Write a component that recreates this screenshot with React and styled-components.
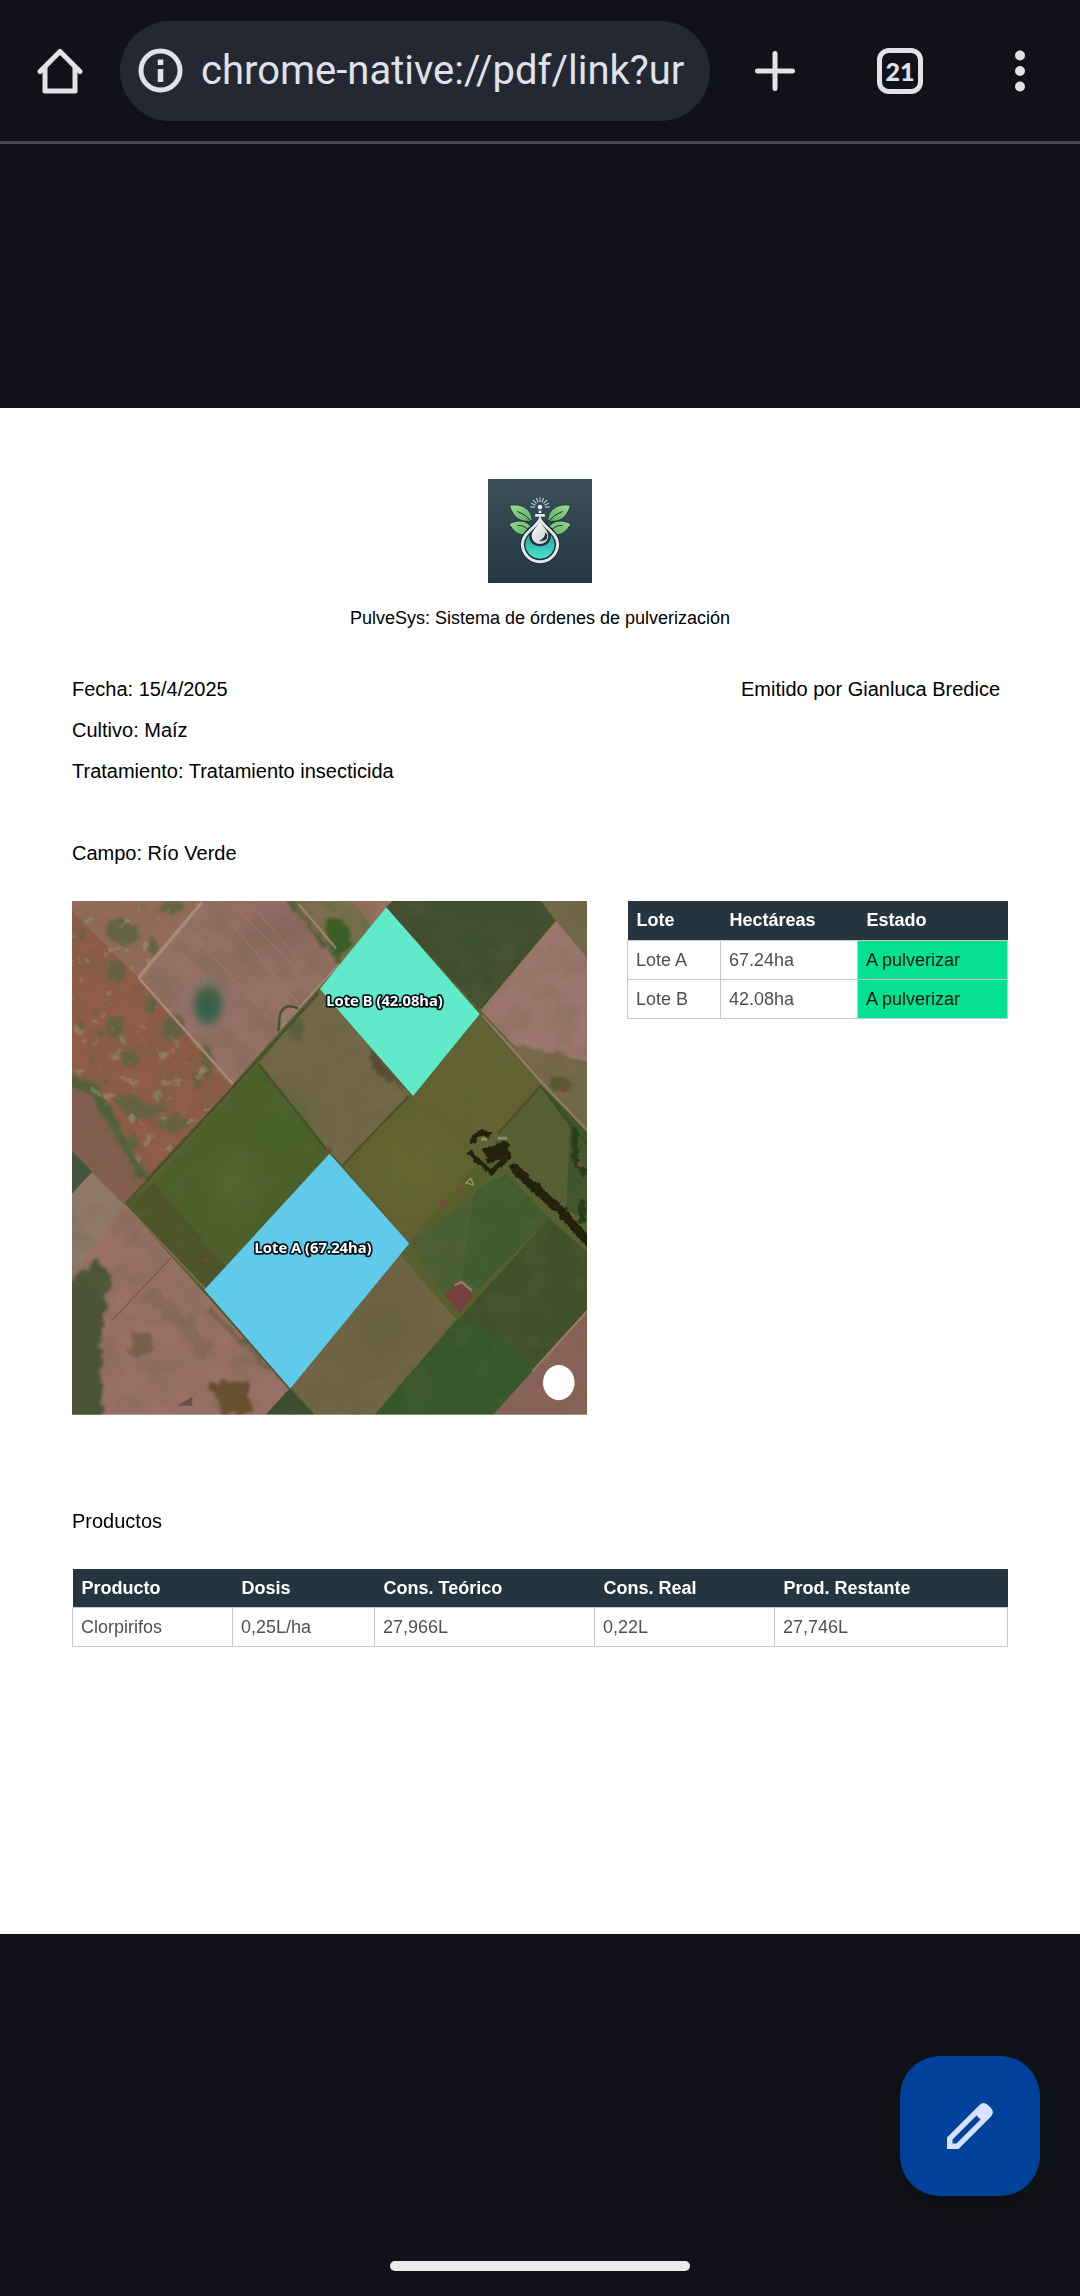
import React from "react";
import styled, { createGlobalStyle } from "styled-components";

const GlobalStyle = createGlobalStyle`
  * { box-sizing: border-box; }
  body { margin: 0; background: #111219; font-family: "Liberation Sans", Arial, sans-serif; }
  button { border: 0; padding: 0; margin: 0; background: none; color: inherit; font: inherit; cursor: pointer; }
`;

const Screen = styled.div`
  min-height: 100vh;
  display: flex;
  flex-direction: column;
  background: #111219;
`;

const Toolbar = styled.header`
  display: flex;
  align-items: center;
  height: 144px;
  border-bottom: 3px solid #49484e;
  color: #e3e2e9;
`;

const IconButton = styled.button`
  flex: none;
  display: flex;
  align-items: center;
  justify-content: center;
  width: ${(p) => p.$width}px;
  height: 100px;
`;

const AddressBar = styled.div`
  flex: 1;
  min-width: 0;
  display: flex;
  align-items: center;
  gap: 18px;
  height: 100px;
  padding: 0 18px;
  border-radius: 50px;
  background: #242833;
`;

const SiteInfo = styled.button`
  flex: none;
  display: flex;
`;

const Address = styled.input`
  flex: 1;
  min-width: 0;
  border: 0;
  padding: 0;
  outline: 0;
  background: none;
  color: #dfe1ec;
  font: 400 40px/60px Roboto, sans-serif;
`;

const TabCount = styled.span`
  display: flex;
  align-items: center;
  justify-content: center;
  width: 46px;
  height: 46px;
  border: 5px solid #e3e2e9;
  border-radius: 12px;
  font: 900 25px/36px Lato, sans-serif;
`;

const Viewer = styled.main`
  padding-top: 264px;
`;

const Sheet = styled.article`
  display: flex;
  flex-direction: column;
  aspect-ratio: 1080 / 1526;
  padding: 71px 72px 0;
  background: #fff;
  color: #000;
`;

const Brand = styled.div`
  display: flex;
  flex-direction: column;
  align-items: center;
  gap: 24px;
  margin-bottom: 40px;
`;

const Title = styled.h1`
  margin: 0;
  font-size: 18px;
  line-height: 22px;
  font-weight: 400;
`;

const Meta = styled.div`
  display: flex;
  justify-content: space-between;
  padding-right: 8px;
`;

const Line = styled.p`
  margin: 0;
  font-size: 20px;
  line-height: 41px;
  font-weight: 400;
`;

const Field = styled(Line)`
  margin: 41px 0 27px;
`;

const Plots = styled.section`
  display: grid;
  grid-template-columns: 515fr 381fr;
  column-gap: 40px;
  align-items: start;
  margin-bottom: 86px;
`;

const MapDrawing = styled.svg`
  display: block;
  width: 100%;
`;

const Table = styled.table`
  width: 100%;
  table-layout: fixed;
  border-collapse: collapse;
  font-size: 18px;
  line-height: 20px;
  color: #505050;
`;

const Head = styled.th`
  height: 39px;
  padding: 0 9px;
  width: ${(p) => p.$width};
  background: #24353f;
  color: #fff;
  font-weight: 700;
  text-align: left;
`;

const Cell = styled.td`
  height: 39px;
  padding: 0 8px;
  border: 1px solid #c8c8c8;
  background: ${(p) => (p.$status ? "#05e091" : "#fff")};
  color: ${(p) => (p.$status ? "#00150c" : "inherit")};
`;

const Products = styled.section`
  display: flex;
  flex-direction: column;
  gap: 27px;
`;

const Footer = styled.footer`
  flex: 1;
  display: flex;
  flex-direction: column;
  align-items: center;
  justify-content: space-between;
  padding: 122px 40px 25px;
`;

const EditButton = styled.button`
  align-self: flex-end;
  display: flex;
  align-items: center;
  justify-content: center;
  width: 140px;
  height: 140px;
  border-radius: 40px;
  background: #00429b;
  color: #d9e2ff;
  box-shadow: 0 10px 16px #0f1113;
`;

const HomeIndicator = styled.div`
  width: 300px;
  height: 10px;
  border-radius: 5px;
  background: #ebebec;
`;

const HomeIcon = () => (
  <svg width="46" height="46" viewBox="0 0 46 46" fill="none" stroke="currentColor" strokeWidth="5" strokeLinejoin="round" strokeLinecap="round" aria-hidden="true">
    <path d="M3 23.500 L23 3.500 L43 23.500" />
    <path d="M8 20 V43 H38 V20" />
  </svg>
);

const InfoIcon = () => (
  <svg width="45" height="45" viewBox="0 0 45 45" fill="none" stroke="#dfe1ec" strokeWidth="5" aria-hidden="true">
    <circle cx="22.500" cy="22.500" r="19.500" />
    <path d="M22.500 21 V34 M22.500 11.500 V17" strokeWidth="5.500" />
  </svg>
);

const PlusIcon = () => (
  <svg width="40" height="40" viewBox="0 0 40 40" stroke="currentColor" strokeWidth="5" strokeLinecap="round" aria-hidden="true">
    <path d="M20 2.500 V37.500 M2.500 20 H37.500" />
  </svg>
);

const MoreIcon = () => (
  <svg width="10" height="42" viewBox="0 0 10 42" fill="currentColor" aria-hidden="true">
    <circle cx="5" cy="5.500" r="5" />
    <circle cx="5" cy="21" r="5" />
    <circle cx="5" cy="36.500" r="5" />
  </svg>
);

const PencilIcon = () => (
  <svg width="46" height="46" viewBox="0 0 46 46" fill="currentColor" fillRule="evenodd" aria-hidden="true">
    <path d="M0 34.500 L32.500 2 Q36.700 -1.800 41 2 L44 5 Q47.800 9.300 44 13.500 L11.500 46 H0 Z M5.500 36.500 V40.500 H9.500 L33.500 16.500 L29.500 12.500 Z" />
  </svg>
);

const rays = [-90, -67, -45, -22, 0, 22, 45, 67, 90];

const BrandLogo = () => (
  <svg width="104" height="104" viewBox="54 57 312 312" role="img" aria-label="PulveSys">
    <defs>
      <linearGradient id="tile" x1="0" y1="0" x2="0" y2="1">
        <stop offset="0" stopColor="#3c505c" />
        <stop offset="1" stopColor="#243742" />
      </linearGradient>
      <linearGradient id="leaf" x1="0" y1="0" x2="1" y2="1">
        <stop offset="0" stopColor="#9adb8f" />
        <stop offset="1" stopColor="#5bb066" />
      </linearGradient>
      <linearGradient id="water" x1="0" y1="0" x2="0" y2="1">
        <stop offset="0" stopColor="#1fa79e" />
        <stop offset="1" stopColor="#4ee0cd" />
      </linearGradient>
      <linearGradient id="drop" x1="0" y1="0" x2="1" y2="1">
        <stop offset="0" stopColor="#ffffff" />
        <stop offset="1" stopColor="#c3cacb" />
      </linearGradient>
      <g id="leaves" stroke="#203640" strokeWidth="3">
        <path d="M118 136 C150 130 184 142 187 182 C154 190 130 175 118 136 Z" fill="url(#leaf)" />
        <path d="M117 192 C144 176 170 182 183 199 L164 224 C144 227 129 212 117 192 Z" fill="url(#leaf)" />
        <path d="M142 154 Q166 162 184 184 M142 196 Q160 194 174 208" fill="none" />
      </g>
    </defs>
    <rect x="54" y="57" width="312" height="312" fill="url(#tile)" />
    <use href="#leaves" />
    <use href="#leaves" transform="translate(420 0) scale(-1 1)" />
    <path d="M210 166 C196 194 150 212 150 252 A60 60 0 0 0 270 252 C270 212 224 194 210 166 Z" fill="#172c35" />
    <path d="M210 177 C199 202 157 219 157 252 A53 53 0 0 0 263 252 C263 219 221 202 210 177 Z" fill="#1d343e" stroke="#e2e7e8" strokeWidth="9" />
    <path d="M178 224 C166 238 163 258 170 270 A43 41 0 0 0 250 270 C257 258 254 238 242 224 C246 270 174 270 178 224 Z" fill="url(#water)" />
    <path d="M210 183 C203 200 185 211 185 228 A25 24 0 0 0 235 228 C235 211 217 200 210 183 Z" fill="url(#drop)" />
    <path d="M226 217 Q226 235 208 242 Q232 246 232 225 Z" fill="#1c3039" />
    <g fill="#e8ecec">
      <rect x="195" y="162" width="30" height="8" rx="3" />
      <rect x="206" y="152" width="8" height="7" />
      <circle cx="210" cy="141" r="7" />
    </g>
    <g stroke="#d5dcde" strokeWidth="3" strokeLinecap="round">
      {rays.map((a) => (
        <path key={a} d="M210 125 V113" transform={`rotate(${a} 210 141)`} />
      ))}
    </g>
  </svg>
);

const redSpots = [
  [160, 240, 26, 34], [158, 395, 26, 30], [170, 120, 34, 42], [200, 490, 24, 22], [262, 330, 18, 22],
  [330, 400, 34, 40], [425, 500, 16, 50], [400, 560, 12, 28], [60, 130, 10, 12], [115, 415, 12, 10],
  [320, 50, 34, 18], [60, 390, 10, 14], [105, 355, 9, 8], [270, 165, 22, 30], [215, 130, 16, 26],
  [240, 640, 60, 26], [330, 680, 44, 24], [190, 610, 40, 20], [205, 740, 16, 26], [90, 500, 10, 6], [130, 560, 12, 8],
];

const FieldMap = () => (
  <MapDrawing viewBox="32 32 1498 1494" role="img" aria-label="Mapa de lotes">
    <defs>
      <filter id="organic" x="-10%" y="-10%" width="120%" height="120%">
        <feTurbulence type="fractalNoise" baseFrequency="0.03" numOctaves="3" seed="4" />
        <feDisplacementMap in="SourceGraphic" scale="38" xChannelSelector="R" yChannelSelector="G" />
        <feGaussianBlur stdDeviation="4" />
      </filter>
      <filter id="canopy" x="-10%" y="-10%" width="120%" height="120%">
        <feTurbulence type="fractalNoise" baseFrequency="0.06" numOctaves="2" seed="7" />
        <feDisplacementMap in="SourceGraphic" scale="16" xChannelSelector="R" yChannelSelector="G" />
        <feGaussianBlur stdDeviation="2" />
      </filter>
      <filter id="edge" x="-5%" y="-5%" width="110%" height="110%">
        <feGaussianBlur stdDeviation="2" />
      </filter>
      <filter id="soft" x="-40%" y="-40%" width="180%" height="180%">
        <feGaussianBlur stdDeviation="12" />
      </filter>
      <filter id="haze" x="-50%" y="-50%" width="200%" height="200%">
        <feGaussianBlur stdDeviation="34" />
      </filter>
      <filter id="grain" x="0" y="0" width="100%" height="100%">
        <feTurbulence type="fractalNoise" baseFrequency="0.012" numOctaves="5" seed="9" />
        <feColorMatrix values="0 0 0 0 0.12  0 0 0 0 0.13  0 0 0 0 0.06  1.6 0 0 0 -0.66" />
      </filter>
      <filter id="tufts" x="0" y="0" width="100%" height="100%">
        <feTurbulence type="fractalNoise" baseFrequency="0.026" numOctaves="3" seed="21" result="n" />
        <feColorMatrix in="n" values="0 0 0 0 0.3  0 0 0 0 0.36  0 0 0 0 0.2  0 7 0 0 -4.4" result="t" />
        <feComposite in="t" in2="SourceGraphic" operator="in" />
      </filter>
      <clipPath id="frame">
        <rect x="32" y="32" width="1498" height="1494" />
      </clipPath>
    </defs>
    <g clipPath="url(#frame)">
      <rect x="32" y="32" width="1498" height="1494" fill="#58602f" />
      <g filter="url(#edge)">
        <path d="M12 12 H430 L225 255 L500 570 L250 835 L100 600 L12 545 Z" fill="#8f5b47" />
        <path d="M12 12 H430 L225 255 L150 180 L12 40 Z" fill="#946b5a" />
        <path d="M430 12 H640 L810 215 L500 565 L225 255 Z" fill="#957065" />
        <path d="M640 12 H985 L755 290 L810 215 Z" fill="#7c6f50" />
        <path d="M830 12 H985 L905 105 Z" fill="#986f60" />
        <path d="M985 12 H1380 L1435 80 L1215 345 L945 50 Z" fill="#425031" />
        <path d="M1380 12 H1550 V220 L1440 90 Z" fill="#706848" />
        <path d="M1440 90 L1550 220 V505 L1320 455 L1220 350 Z" fill="#9d776d" />
        <path d="M1220 360 L1320 455 L1550 505 V720 L1390 560 Z" fill="#746848" />
        <path d="M755 290 L1015 595 L820 800 L780 760 L575 505 Z" fill="#736847" />
        <path d="M575 505 L780 765 L480 1095 L270 850 Z" fill="#4b602b" />
        <path d="M270 850 L480 1095 L420 1160 L190 915 Z" fill="#50552c" />
        <path d="M1215 365 L1395 570 L1180 830 L1010 1025 L820 800 L1025 595 Z" fill="#626233" />
        <path d="M1395 570 L1480 690 L1470 930 L1290 790 L1275 710 Z" fill="#566031" />
        <path d="M1395 570 L1550 720 V970 L1470 930 L1480 690 Z" fill="#405429" />
        <path d="M1240 870 L1300 820 L1420 955 L1200 1175 L1110 1170 L1010 1025 Z" fill="#4c6030" />
        <path d="M1200 890 Q1220 850 1300 830 L1420 955 L1215 1160 L1165 1130 Z" fill="#3f5d2d" />
        <path d="M1420 955 L1550 1070 V1200 L1240 1546 H890 Z" fill="#3f5129" />
        <path d="M1150 1250 Q1290 1270 1370 1400 L1240 1546 H890 Z" fill="#35592a" />
        <path d="M985 1060 L1150 1250 L895 1546 H755 L670 1445 Z" fill="#706545" />
        <path d="M1550 1200 V1546 H1240 Z" fill="#8a6458" />
        <path d="M665 1450 L755 1546 H577 Z" fill="#3a4d2d" />
        <path d="M85 820 L185 915 L665 1450 L577 1546 H12 V880 Z" fill="#997065" />
        <path d="M12 900 L90 820 L185 915 L12 1165 Z" fill="#8f7868" />
        <path d="M12 550 L130 620 L250 850 L185 915 L12 740 Z" fill="#845f50" />
        <path d="M12 740 L90 820 L12 905 Z" fill="#42553d" />
      </g>

      <g filter="url(#organic)">
        <path d="M12 540 Q100 540 130 610 L250 830 L235 850 L90 600 L12 570 Z" fill="#50603a" />
        <path d="M12 1150 L110 1070 L145 1130 L120 1250 V1546 H12 Z" fill="#4b5534" />
        <path d="M765 90 Q790 50 835 110 L860 160 L800 205 Z" fill="#3b5f27" />
        <path d="M660 30 L810 210" stroke="#4f5f38" strokeWidth="12" />
        <path d="M760 32 L900 110" stroke="#67704c" strokeWidth="9" />
        <ellipse cx="685" cy="405" rx="24" ry="42" fill="#5a613c" />
        <path d="M900 460 L1005 580 Q940 560 905 510 Z" fill="#594830" />
        <path d="M1320 460 Q1400 455 1530 500 V530 Q1400 530 1320 470 Z" fill="#78684c" />
        <ellipse cx="1450" cy="565" rx="34" ry="20" fill="#555a2d" />
        <path d="M430 1430 H550 L560 1526 H470 Z" fill="#66502f" />
        <ellipse cx="235" cy="1325" rx="38" ry="36" fill="#776148" />
        <path d="M250 1170 L370 1270 L420 1350" stroke="#866a5a" strokeWidth="44" fill="none" />
        <path d="M430 1220 L665 1440" stroke="#75604d" strokeWidth="16" />
        {redSpots.map(([x, y, rx, ry]) => (
          <ellipse key={`${x}-${y}`} cx={x} cy={y} rx={rx} ry={ry} fill="#5b6341" opacity="0.8" />
        ))}
      </g>
      <g filter="url(#soft)">
        <ellipse cx="428" cy="328" rx="52" ry="76" fill="#82766c" />
        <ellipse cx="428" cy="335" rx="42" ry="56" fill="#34604a" />
      </g>
      <g filter="url(#haze)">
        <ellipse cx="500" cy="850" rx="70" ry="90" fill="#5d6c3a" opacity="0.5" />
        <ellipse cx="650" cy="670" rx="80" ry="60" fill="#46642a" opacity="0.6" />
        <ellipse cx="1020" cy="800" rx="120" ry="110" fill="#67692f" opacity="0.5" />
        <ellipse cx="930" cy="1270" rx="80" ry="90" fill="#625c3b" opacity="0.5" />
        <ellipse cx="1200" cy="130" rx="110" ry="70" fill="#3b5231" opacity="0.7" />
        <ellipse cx="630" cy="120" rx="110" ry="70" fill="#88605a" opacity="0.5" />
      </g>
      <path d="M32 60 L410 32 L225 255 L500 570 L250 835 L100 600 L32 545 Z" filter="url(#tufts)" opacity="0.5" />
      <rect x="32" y="32" width="1498" height="1494" filter="url(#grain)" opacity="0.4" />

      <g filter="url(#edge)" fill="none" stroke="#ab8b77">
        <path d="M410 36 L225 255" strokeWidth="10" />
        <path d="M225 255 L500 565" strokeWidth="7" />
        <path d="M690 40 L800 170 M810 215 L640 400" strokeWidth="5" />
        <path d="M1225 365 L1390 550 L1530 700" strokeWidth="5" opacity="0.7" />
        <path d="M1530 1225 L1370 1400" strokeWidth="4" />
        <path d="M185 915 L420 1160" strokeWidth="4" opacity="0.5" />
        <path d="M320 1070 L150 1250" stroke="#7b5247" strokeWidth="3" />
        <path d="M480 80 L690 330 M520 60 L740 290 M385 130 L600 370 M340 170 L420 260 M570 60 L680 190" strokeWidth="4" opacity="0.35" />
      </g>
      <g filter="url(#edge)" fill="none" stroke="#3a4722" strokeWidth="7" opacity="0.6">
        <path d="M750 300 L440 640 L190 910 M575 505 L780 765 M1010 600 L820 800 M1435 85 L1220 345" />
        <path d="M1395 570 L1270 710 M1395 570 L1530 740 M420 1165 L665 1450" />
      </g>
      <path d="M668 338 L690 350 L655 390 Q635 385 640 360 Z" fill="#9b7769" />
      <path d="M690 345 Q650 325 637 362 L632 410" fill="none" stroke="#46542d" strokeWidth="7" />
      <g filter="url(#canopy)" fill="none" stroke="#20240f">
        <path d="M1310 802 L1450 930 L1550 1040" strokeWidth="27" />
        <path d="M1195 735 Q1215 690 1250 715 M1185 760 L1250 820 L1300 780 L1290 730" strokeWidth="16" />
        <path d="M1235 775 L1290 755" strokeWidth="48" />
        <path d="M1495 690 V780 L1525 830 M1515 900 V970" strokeWidth="18" stroke="#2b3c1c" />
      </g>
      <path d="M1270 722 H1298 M1222 725 H1240" stroke="#8d8a69" strokeWidth="9" />
      <g filter="url(#edge)">
        <path d="M1155 1135 L1200 1180 L1160 1230 L1115 1180 Z" fill="#743f3f" />
        <path d="M1145 1150 L1165 1140 L1195 1165" stroke="#9a7666" strokeWidth="7" fill="none" />
        <g fill="#7a4a38">
          <circle cx="1460" cy="580" r="9" />
          <circle cx="1510" cy="797" r="8" />
          <circle cx="1158" cy="872" r="9" />
          <circle cx="1110" cy="910" r="10" />
          <circle cx="780" cy="757" r="9" />
          <circle cx="420" cy="1077" r="6" />
        </g>
        <path d="M340 1500 L382 1474 V1500 Z" fill="#67504a" />
      </g>
      <path d="M1178 852 L1192 838 L1200 858 Z" fill="none" stroke="#a9a37d" strokeWidth="3" />
    </g>

    <polygon points="946,50 1218,361 1024,599 753,288" fill="#60eaca" />
    <polygon points="781,767 1013,1028 667,1450 417,1163" fill="#60caea" />
    <ellipse cx="1448" cy="1433" rx="46" ry="51" fill="#fff" />
    <g fontFamily="'Noto Sans', sans-serif" fontWeight="700" fontSize="43" textAnchor="middle" fill="#fff" stroke="#06141a" strokeWidth="10" strokeLinejoin="round" paintOrder="stroke">
      <text x="941" y="337">Lote B (42.08ha)</text>
      <text x="733" y="1056">Lote A (67.24ha)</text>
    </g>
  </MapDrawing>
);

const lots = [
  ["Lote A", "67.24ha"],
  ["Lote B", "42.08ha"],
];

const productHeads = [
  ["Producto", "160px"],
  ["Dosis", "142px"],
  ["Cons. Teórico", "220px"],
  ["Cons. Real", "180px"],
  ["Prod. Restante", "auto"],
];

const productRows = [["Clorpirifos", "0,25L/ha", "27,966L", "0,22L", "27,746L"]];

export default function App() {
  return (
    <Screen>
      <GlobalStyle />
      <Toolbar>
        <IconButton $width={120} aria-label="Inicio"><HomeIcon /></IconButton>
        <AddressBar>
          <SiteInfo aria-label="Información del sitio"><InfoIcon /></SiteInfo>
          <Address aria-label="Dirección" defaultValue="chrome-native://pdf/link?ur" />
        </AddressBar>
        <IconButton $width={130} aria-label="Nueva pestaña"><PlusIcon /></IconButton>
        <IconButton $width={120} aria-label="Pestañas"><TabCount>21</TabCount></IconButton>
        <IconButton $width={120} aria-label="Más opciones"><MoreIcon /></IconButton>
      </Toolbar>

      <Viewer>
        <Sheet>
          <Brand>
            <BrandLogo />
            <Title>PulveSys: Sistema de órdenes de pulverización</Title>
          </Brand>
          <Meta>
            <div>
              <Line>Fecha: 15/4/2025</Line>
              <Line>Cultivo: Maíz</Line>
              <Line>Tratamiento: Tratamiento insecticida</Line>
            </div>
            <Line>Emitido por Gianluca Bredice</Line>
          </Meta>
          <Field>Campo: Río Verde</Field>
          <Plots>
            <FieldMap />
            <Table>
              <thead>
                <tr>
                  <Head $width="93px">Lote</Head>
                  <Head $width="137px">Hectáreas</Head>
                  <Head $width="auto">Estado</Head>
                </tr>
              </thead>
              <tbody>
                {lots.map(([name, area]) => (
                  <tr key={name}>
                    <Cell>{name}</Cell>
                    <Cell>{area}</Cell>
                    <Cell $status>A pulverizar</Cell>
                  </tr>
                ))}
              </tbody>
            </Table>
          </Plots>
          <Products>
            <Line as="h2">Productos</Line>
            <Table>
              <thead>
                <tr>
                  {productHeads.map(([label, width]) => (
                    <Head key={label} $width={width}>{label}</Head>
                  ))}
                </tr>
              </thead>
              <tbody>
                {productRows.map((row) => (
                  <tr key={row[0]}>
                    {row.map((value) => <Cell key={value}>{value}</Cell>)}
                  </tr>
                ))}
              </tbody>
            </Table>
          </Products>
        </Sheet>
      </Viewer>

      <Footer>
        <EditButton aria-label="Editar"><PencilIcon /></EditButton>
        <HomeIndicator />
      </Footer>
    </Screen>
  );
}
